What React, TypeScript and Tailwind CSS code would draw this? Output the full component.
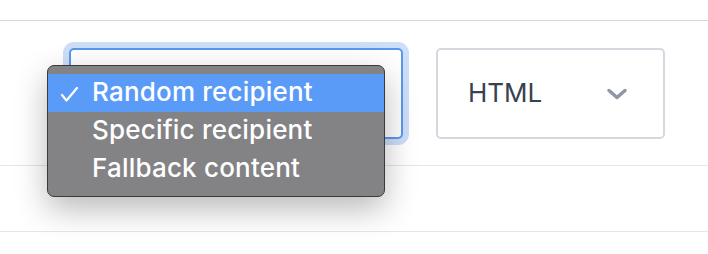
import React from "react";

const items = ["Random recipient", "Specific recipient", "Fallback content"];

export default function App() {
  return (
    <div className="w-[708px] h-[254px] bg-white overflow-hidden" style={{ fontFamily: "Inter, 'Liberation Sans', sans-serif" }}>
      <div className="pt-[20px]">
        <div className="h-px bg-[#d3d7de]" />
        <div className="flex items-start pl-[69px] pt-[27px] gap-[33px]">
          <div className="relative">
            <div className="w-[334px] h-[91px] rounded-[5px] border-2 border-[#5b97ef] bg-white shadow-[0_0_0_6px_#cddef9]" />
            <div className="absolute left-[-22px] top-[17px] w-[338px] rounded-[7px] border border-[#3a3a3a] bg-[#838385] py-[8px] shadow-[0_12px_32px_rgba(0,0,0,0.28)] z-10">
              {items.map((it, i) => (
                <div
                  key={it}
                  className={`relative h-[38px] flex items-center pl-[44px] text-[26px] font-medium tracking-[0.2px] leading-[38px] text-white ${i === 0 ? "bg-[#5b9bf8]" : ""}`}
                >
                  {i === 0 && (
                    <svg className="absolute left-[12px] top-[12px]" width="19" height="16" viewBox="0 0 19 16" fill="none">
                      <path d="M2 9 L6.5 14.5 L17 2" stroke="white" strokeWidth="2.2" strokeLinecap="round" strokeLinejoin="round" />
                    </svg>
                  )}
                  <span className="-mt-[2px]">{it}</span>
                </div>
              ))}
            </div>
          </div>
          <div className="w-[229px] h-[91px] rounded-[5px] border-2 border-[#d5d8de] bg-white flex items-center justify-between pl-[30px] pr-[35px]">
            <span className="text-[26px] text-[#394150] -mt-[2px]">HTML</span>
            <svg width="22" height="12" viewBox="0 0 22 12" fill="none" className="mt-[1px]">
              <path d="M3 2.5 L11 9.5 L19 2.5" stroke="#8f97a5" strokeWidth="3.5" strokeLinecap="round" strokeLinejoin="round" />
            </svg>
          </div>
        </div>
        <div className="mt-[26px] h-px bg-[#e6e5ec]" />
        <div className="mt-[65px] h-px bg-[#e6e5ec]" />
      </div>
    </div>
  );
}
